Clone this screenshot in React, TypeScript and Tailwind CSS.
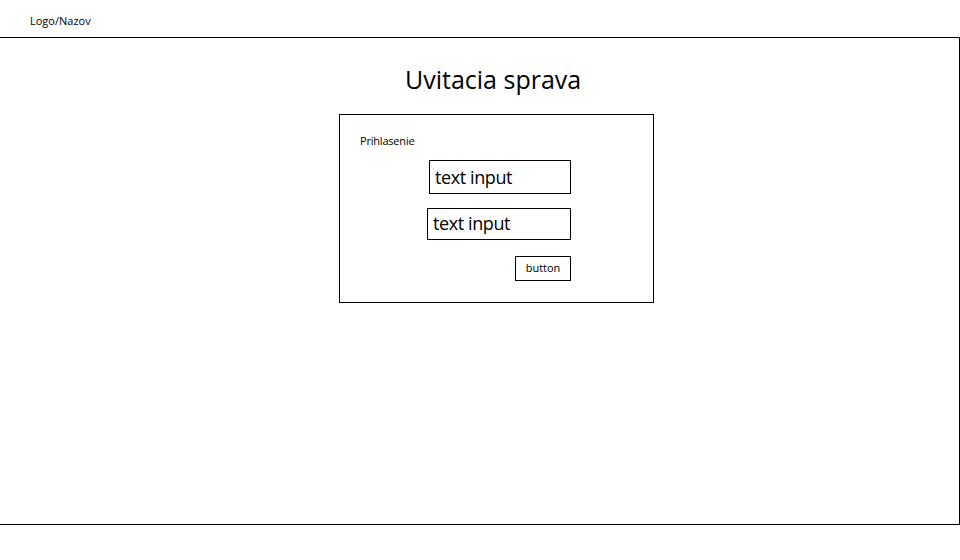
const font = { fontFamily: '"Open Sans", "Noto Sans", sans-serif' };

export default function App() {
  return (
    <div className="w-[960px] h-[560px] bg-white text-black" style={font}>
      <header className="h-[37px] pl-[30px] pt-[13px] text-[11px] leading-[16px]">Logo/Nazov</header>
      <main className="w-[960px] h-[488px] border-t-[1.5px] border-r-[1.5px] border-b-[1.5px] border-black">
        <h1 className="mt-[24px] ml-[405px] text-[25px] leading-[34px]">Uvitacia sprava</h1>
        <section className="mt-[18px] ml-[339px] w-[315px] h-[189px] border border-black flex flex-col">
          <p className="mt-[18px] ml-[20px] text-[11px] leading-[16px] tracking-[-0.2px]">Prihlasenie</p>
          <div className="mt-[11px] ml-[89px] w-[142px] h-[34px] border border-black pl-[5px] text-[18px] leading-[33px] tracking-[-0.4px]">text input</div>
          <div className="mt-[14px] ml-[87px] w-[144px] h-[32px] border border-black pl-[5px] text-[18px] leading-[29px] tracking-[-0.4px]">text input</div>
          <div className="mt-[16px] ml-[175px] w-[56px] h-[25px] border border-black flex items-center justify-center text-[11px]">button</div>
        </section>
      </main>
    </div>
  );
}
